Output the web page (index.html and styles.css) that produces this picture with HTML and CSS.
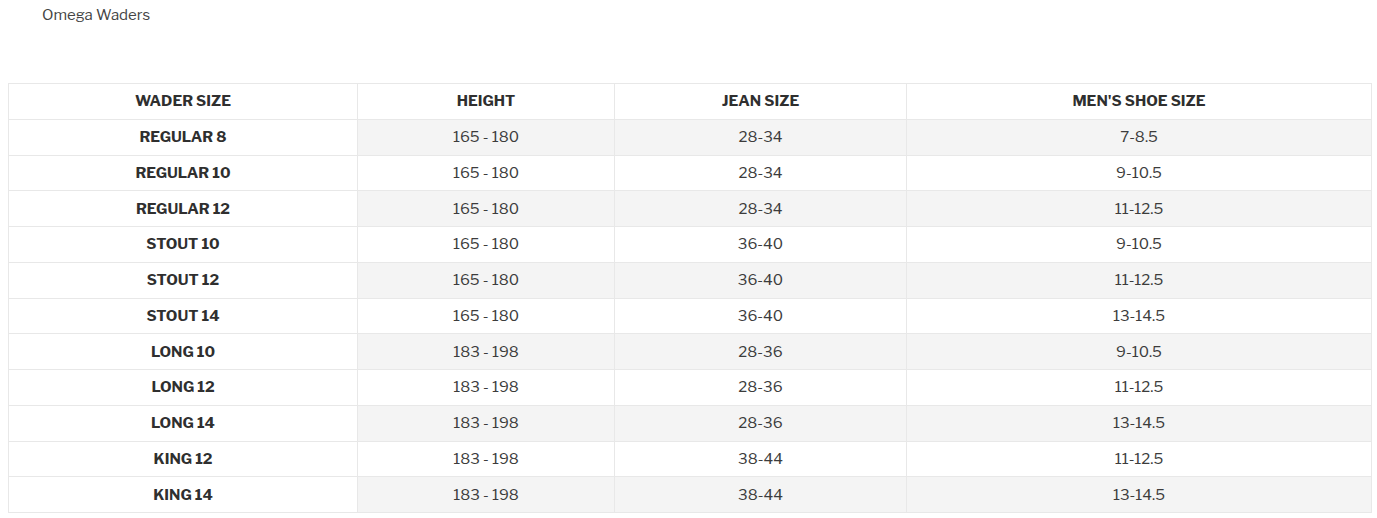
FILE: index.html
```html
<!DOCTYPE html>
<html>
<head>
<meta charset="utf-8">
<link rel="stylesheet" href="styles.css">
</head>
<body>
<div class="title">Omega Waders</div>
<table class="size-table">
  <colgroup>
    <col class="c1"><col class="c2"><col class="c3"><col class="c4">
  </colgroup>
  <thead>
    <tr><th>WADER SIZE</th><th>HEIGHT</th><th>JEAN SIZE</th><th>MEN'S SHOE SIZE</th></tr>
  </thead>
  <tbody>
    <tr class="odd"><th>REGULAR 8</th><td>165 - 180</td><td>28-34</td><td>7-8.5</td></tr>
    <tr><th>REGULAR 10</th><td>165 - 180</td><td>28-34</td><td>9-10.5</td></tr>
    <tr class="odd"><th>REGULAR 12</th><td>165 - 180</td><td>28-34</td><td>11-12.5</td></tr>
    <tr><th>STOUT 10</th><td>165 - 180</td><td>36-40</td><td>9-10.5</td></tr>
    <tr class="odd"><th>STOUT 12</th><td>165 - 180</td><td>36-40</td><td>11-12.5</td></tr>
    <tr><th>STOUT 14</th><td>165 - 180</td><td>36-40</td><td>13-14.5</td></tr>
    <tr class="odd"><th>LONG 10</th><td>183 - 198</td><td>28-36</td><td>9-10.5</td></tr>
    <tr><th>LONG 12</th><td>183 - 198</td><td>28-36</td><td>11-12.5</td></tr>
    <tr class="odd"><th>LONG 14</th><td>183 - 198</td><td>28-36</td><td>13-14.5</td></tr>
    <tr><th>KING 12</th><td>183 - 198</td><td>38-44</td><td>11-12.5</td></tr>
    <tr class="odd"><th>KING 14</th><td>183 - 198</td><td>38-44</td><td>13-14.5</td></tr>
  </tbody>
</table>
</body>
</html>
```
FILE: styles.css
```css
html, body {
  margin: 0;
  padding: 0;
  background: #ffffff;
}
body {
  font-family: "Libre Franklin", "Roboto", "Liberation Sans", sans-serif;
  color: #3a3a3a;
}
.title {
  padding: 5px 0 0 42px;
  height: 83px;
  box-sizing: border-box;
  font-size: 15px;
  line-height: 20px;
  color: #444;
}
.size-table {
  margin-left: 8px;
  width: 1363px;
  border-collapse: collapse;
  table-layout: fixed;
}
.c1 { width: 349px; }
.c2 { width: 257px; }
.c3 { width: 292px; }
.c4 { width: 465px; }
.size-table th,
.size-table td {
  border: 1px solid #e8e8e8;
  text-align: center;
  vertical-align: middle;
  padding: 0;
  height: 34.75px;
  font-size: 15px;
}
.size-table th {
  font-weight: 700;
  font-size: 15px;
  color: #2f2f2f;
  background: #fff;
}
.size-table td {
  font-weight: 400;
  color: #3c3c3c;
}
.size-table tr.odd td {
  background: #f4f4f4;
}
```
